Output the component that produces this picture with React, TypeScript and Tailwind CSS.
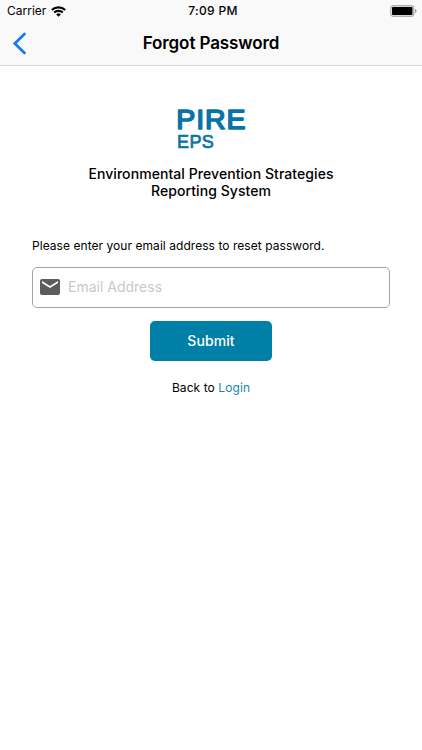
import { MdEmail } from "react-icons/md";

const StatusBar = () => {
    return (
        <div className="grid h-[22px] grid-cols-3 items-center pl-[7px] pr-[5px] text-[12px] leading-none">
            <div className="flex items-center gap-[5px]">
                <span className="w-[39px]">Carrier</span>
                <svg width="15" height="11" viewBox="0 0 15 11" fill="none" stroke="black" strokeWidth="2.1">
                    <path d="M0.8 4.1a9.5 9.5 0 0 1 13.4 0" />
                    <path d="M3.2 6.6a6.1 6.1 0 0 1 8.6 0" />
                    <path d="M7.5 10.8L5.2 8.4a3.3 3.3 0 0 1 4.6 0z" fill="black" stroke="none" />
                </svg>
            </div>
            <span className="pl-[2px] text-center font-medium tracking-[0.3px]">7:09 PM</span>
            <svg className="justify-self-end" width="27" height="12" viewBox="0 0 27 12">
                <rect x="0.75" y="0.75" width="23" height="10.5" rx="2.5" fill="none" stroke="#b0b0b0" strokeWidth="1.3" />
                <rect x="2" y="2" width="20.5" height="8" rx="1" />
                <path d="M25 4v4c1-.3 1.5-1 1.5-2S26 4.3 25 4z" fill="#a0a0a0" />
            </svg>
        </div>
    );
};

const Logo = () => {
    return (
        <svg
            width="74"
            height="51"
            viewBox="0 0 74 51"
            className="self-center font-['Liberation_Sans',sans-serif]"
            fill="#0874a6"
            stroke="#0874a6"
            strokeLinejoin="round"
        >
            <text x="2.3" y="25" fontSize="28.5" strokeWidth="1.6" letterSpacing="0.9">PIRE</text>
            <text x="3" y="44" fontSize="18" strokeWidth="0.7" letterSpacing="0.4">EPS</text>
        </svg>
    );
};

const App: React.FC = () => {
    return (
        <div className="h-[750px] w-full bg-white font-['Inter',sans-serif] text-black">
            <header className="h-[66px] border-b border-[#d8d8d8] bg-[#f9f9f9]">
                <StatusBar />
                <div className="grid h-[43px] grid-cols-[1fr_auto_1fr] items-center">
                    <button type="button" aria-label="Back" className="pl-[12px]">
                        <svg width="15" height="23" viewBox="0 0 15 23" fill="none" stroke="#1478f0" strokeWidth="2.7" strokeLinecap="round">
                            <path d="M12.5 2L2.8 11.5l9.7 9.5" />
                        </svg>
                    </button>
                    <h1 className="text-[17px] font-semibold tracking-[-0.1px]">Forgot Password</h1>
                </div>
            </header>
            <main className="flex flex-col px-8 pt-[38px]">
                <Logo />
                <h2 className="mt-[10px] text-center text-[14px] font-medium leading-[17px] tracking-[0.07px]">
                    Environmental Prevention Strategies
                    <br />
                    Reporting System
                </h2>
                <p className="mt-[39px] text-[12px] leading-[16px] tracking-[0.05px]">Please enter your email address to reset password.</p>
                <label className="mt-[13px] flex h-[41px] items-center rounded-[5px] border border-[#a3a3a3] pb-px pl-[5px]">
                    <MdEmail className="size-6 shrink-0 text-[#5c5c5c]" />
                    <input
                        type="email"
                        placeholder="Email Address"
                        className="ml-[6px] w-full pb-px text-[14px] outline-none placeholder:text-[#c8c8cb]"
                    />
                </label>
                <button type="button" className="mt-[13px] h-10 w-[122px] self-center rounded-[5px] bg-[#0080a6] pb-[2px] text-[14px] font-medium tracking-[0.1px] text-white">
                    Submit
                </button>
                <p className="mt-[19px] text-center text-[12px] leading-[16px] tracking-[0.08px]">
                    Back to <a className="text-[#1886ad]">Login</a>
                </p>
            </main>
        </div>
    );
};

export default App;
